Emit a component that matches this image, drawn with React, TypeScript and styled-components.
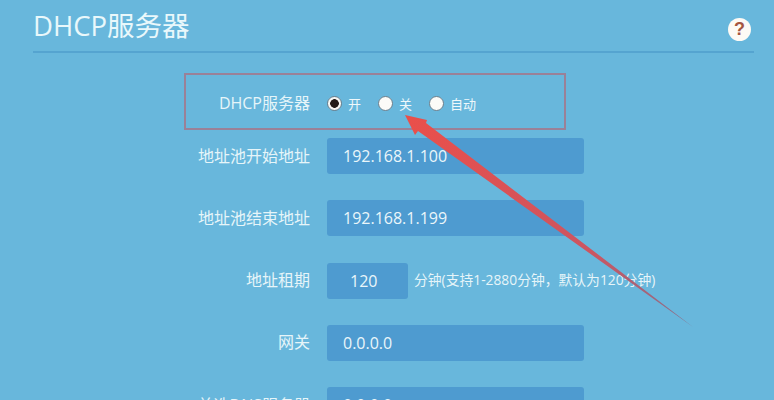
import React from "react";
import styled, { createGlobalStyle } from "styled-components";

const GlobalStyle = createGlobalStyle`
  html, body { margin: 0; padding: 0; height: 400px; overflow: hidden; background: #68b7dc; }
  body { font-family: "Open Sans", "Noto Sans CJK SC", sans-serif; }
`;

const Page = styled.main`
  position: relative;
  width: 774px;
  height: 400px;
  overflow: hidden;
  padding: 0 20px 0 33px;
  box-sizing: border-box;
  background: #68b7dc;
  color: #e9f7fb;
`;

const Header = styled.header`
  display: flex;
  align-items: center;
  justify-content: space-between;
  height: 53px;
  padding-right: 3px;
  box-sizing: border-box;
  border-bottom: 2px solid #55a4d0;
`;

const Title = styled.h1`
  margin: 0;
  font-size: 27.5px;
  line-height: 50px;
  font-weight: 400;
  color: #e9f8fb;
`;

const HelpButton = styled.button`
  display: flex;
  align-items: center;
  justify-content: center;
  width: 23px;
  height: 23px;
  padding: 0;
  margin-top: 7px;
  border: 0;
  border-radius: 50%;
  background: #fdfaf5;
  color: #a5563f;
  font: 700 18px "Liberation Sans", sans-serif;
`;

const Form = styled.form`
  display: flex;
  flex-direction: column;
  gap: 26.25px;
  margin: 20px 0 0 151px;
  width: 400px;
`;

const Row = styled.div`
  display: grid;
  grid-template-columns: 126px auto;
  column-gap: 17px;
  justify-content: start;
  align-items: center;
  height: 36px;
`;

const HighlightRow = styled(Row)`
  width: 382px;
  height: 57px;
  box-sizing: border-box;
  margin-bottom: -18.25px;
  padding-top: 3px;
  border: 2px solid #9a8198;
  grid-template-columns: 124px auto;
  column-gap: 17px;
  align-items: center;
`;

const Label = styled.label`
  padding-bottom: 3px;
  font-size: 16px;
  text-align: right;
  color: #e6f5f9;
  white-space: nowrap;
`;

const Field = styled.input<{ $narrow?: boolean }>`
  width: ${(p) => (p.$narrow ? "81px" : "257px")};
  height: 36px;
  box-sizing: border-box;
  padding: 0 0 0 ${(p) => (p.$narrow ? "23px" : "16px")};
  border: 0;
  border-radius: 3px;
  outline: 0;
  background: #4e9bd0;
  color: #eaf6fa;
  font-family: "Open Sans", sans-serif;
  font-size: 16px;
`;

const FieldGroup = styled.div`
  display: flex;
  align-items: center;
  gap: 6px;
`;

const Hint = styled.span`
  padding-bottom: 3px;
  font-size: 13.8px;
  color: #e6f5f9;
  white-space: nowrap;
`;

const RadioGroup = styled.div`
  display: flex;
  align-items: center;
`;

const RadioOption = styled.span`
  display: flex;
  align-items: center;
  gap: 6px;
  font-size: 13px;
  color: #eef8fb;
  margin-right: 17px;
`;

const RadioDot = styled.i<{ $on?: boolean }>`
  display: block;
  width: 15px;
  height: 15px;
  box-sizing: border-box;
  border-radius: 50%;
  border: 1px solid #6c7f8c;
  background: ${(p) =>
    p.$on ? "radial-gradient(circle, #221a18 0 4px, #f7f7f4 4.6px)" : "#fbfbf8"};
`;

const Arrow = styled.svg`
  position: absolute;
  left: 0;
  top: 0;
  pointer-events: none;
`;

const radios = [
  { text: "开", on: true },
  { text: "关" },
  { text: "自动" },
];

const rows = [
  { label: "地址池开始地址", value: "192.168.1.100" },
  { label: "地址池结束地址", value: "192.168.1.199" },
  { label: "地址租期", value: "120", narrow: true, hint: "分钟(支持1-2880分钟，默认为120分钟)" },
  { label: "网关", value: "0.0.0.0" },
  { label: "首选DNS服务器", value: "0.0.0.0" },
];

export default function App() {
  return (
    <Page>
      <GlobalStyle />
      <Header>
        <Title>DHCP服务器</Title>
        <HelpButton type="button">?</HelpButton>
      </Header>
      <Form>
        <HighlightRow>
          <Label>DHCP服务器</Label>
          <RadioGroup>
            {radios.map((r) => (
              <RadioOption key={r.text}>
                <RadioDot $on={r.on} />
                {r.text}
              </RadioOption>
            ))}
          </RadioGroup>
        </HighlightRow>
        {rows.map((r) => (
          <Row key={r.label}>
            <Label>{r.label}</Label>
            <FieldGroup>
              <Field readOnly value={r.value} $narrow={r.narrow} />
              {r.hint && <Hint>{r.hint}</Hint>}
            </FieldGroup>
          </Row>
        ))}
      </Form>
      <Arrow width="774" height="400" viewBox="0 0 774 400">
        <defs>
          <linearGradient id="shaft" x1="405" y1="115" x2="690" y2="325" gradientUnits="userSpaceOnUse">
            <stop offset="0" stopColor="#ea4f4a" />
            <stop offset="0.65" stopColor="#cc5561" />
            <stop offset="1" stopColor="#86708c" />
          </linearGradient>
        </defs>
        <polygon
          points="405,115 427,120 426,123 693,327 418,131 415,135"
          fill="url(#shaft)"
        />
      </Arrow>
    </Page>
  );
}
